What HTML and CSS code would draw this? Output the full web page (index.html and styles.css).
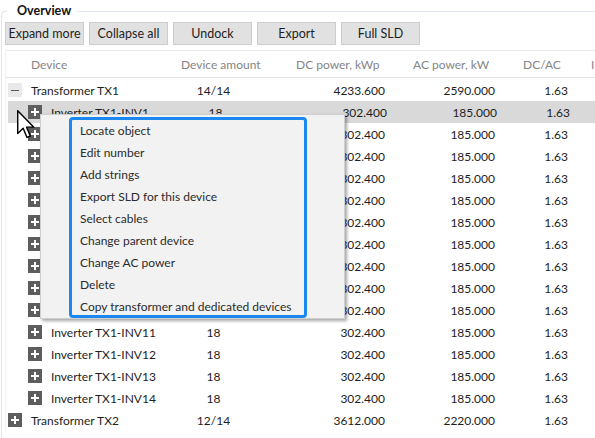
FILE: index.html
```html
<!DOCTYPE html>
<html lang="en">
<head>
    <meta charset="UTF-8">
    <title>Overview</title>
    <link rel="stylesheet" href="styles.css">
</head>
<body>
    <fieldset class="group">
        <legend>Overview</legend>

        <!-- Toolbar -->
        <div class="toolbar">
            <button>Expand more</button>
            <button>Collapse all</button>
            <button>Undock</button>
            <button>Export</button>
            <button>Full SLD</button>
        </div>

        <!-- Device tree -->
        <div class="tree">
            <div class="row head">
                <div class="c-name">Device</div>
                <div class="c-amount">Device amount</div>
                <div class="c-num">DC power, kWp</div>
                <div class="c-num">AC power, kW</div>
                <div class="c-num">DC/AC</div>
                <div class="c-num">I</div>
            </div>
            <div id="rows"></div>
        </div>
    </fieldset>

    <!-- Context menu over the tree -->
    <div class="menu">
        <ul class="menu-list">
            <li>Locate object</li>
            <li>Edit number</li>
            <li>Add strings</li>
            <li>Export SLD for this device</li>
            <li>Select cables</li>
            <li>Change parent device</li>
            <li>Change AC power</li>
            <li>Delete</li>
            <li>Copy transformer and dedicated devices</li>
        </ul>
    </div>

    <svg class="cursor" width="20" height="30" viewBox="0 0 14 21">
        <path d="M0.5 0.5 L0.5 16.5 L4.3 12.8 L7 19.2 L9.3 18.2 L6.7 12 L11.8 12 Z" fill="#fff" stroke="#000" stroke-width="1" stroke-linejoin="round"/>
    </svg>

    <script>
        const rows = [
            { level: 0, open: true, name: "Transformer TX1", amount: "14/14", dc: "4233.600", ac: "2590.000", ratio: "1.63" }
        ];
        for (let i = 1; i <= 14; i++) {
            rows.push({ level: 1, name: "Inverter TX1-INV" + i, amount: "18", dc: "302.400", ac: "185.000", ratio: "1.63", selected: i === 1 });
        }
        rows.push({ level: 0, name: "Transformer TX2", amount: "12/14", dc: "3612.000", ac: "2220.000", ratio: "1.63" });

        const box = document.getElementById("rows");
        rows.forEach(r => {
            const icon = r.open ? `<span class="toggle open"></span>` : `<span class="toggle"></span>`;
            box.insertAdjacentHTML("beforeend", `
                <div class="row${r.selected ? " selected" : ""}">
                    <div class="c-name lvl${r.level}">${icon}<span>${r.name}</span></div>
                    <div class="c-amount">${r.amount}</div>
                    <div class="c-num">${r.dc}</div>
                    <div class="c-num">${r.ac}</div>
                    <div class="c-num">${r.ratio}</div>
                    <div class="c-num"></div>
                </div>`);
        });
    </script>
</body>
</html>
```

FILE: styles.css
```css
body {
    margin: 0;
    font-family: 'Lato', 'Noto Sans', sans-serif;
    font-size: 12px;
    color: #1e1e1e;
    background: #fff;
    width: 595px;
    height: 438px;
    overflow: hidden;
    position: relative;
}

/* Group box */
.group {
    margin: 3px 0 0 1px;
    padding: 0 0 0 3px;
    border: 1px solid #dfe5ec;
    border-right: none;
    border-bottom: none;
    border-radius: 4px 0 0 0;
    width: 594px;
    height: 435px;
    box-sizing: border-box;
    overflow: hidden;
}

.group legend {
    font-weight: bold;
    font-size: 12.5px;
    color: #111;
    padding: 0 6px 0 10px;
    margin-left: 2px;
    line-height: 16px;
}

/* Toolbar */
.toolbar {
    display: flex;
    gap: 5px;
    margin-top: 3px;
}

.toolbar button {
    width: 79px;
    height: 23px;
    padding: 0;
    font-family: inherit;
    font-size: 12.5px;
    color: #1e1e1e;
    background: #e1e1e1;
    border: 1px solid #cdcdcd;
}

/* Tree grid */
.tree {
    margin-top: 5px;
    border-top: 1px solid #e6eaee;
    border-left: 1px solid #eef1f4;
    overflow: hidden;
}

.row {
    display: grid;
    grid-template-columns: 165px 115px 117px 110px 68px minmax(0, 1fr);
    height: 22px;
    align-items: center;
}

.row > div {
    white-space: nowrap;
    overflow: hidden;
}

.row.head {
    height: 26px;
    color: #858585;
    border-bottom: 1px solid #e3e6e9;
    margin-bottom: 1px;
}

.row.head div {
    text-align: left;
    padding: 0 0 0 10px;
}

.row.head .c-name {
    padding-left: 25px;
}

.row.selected {
    background: #d9d9d9;
    margin-left: 2px;
}

.row.selected .c-name {
    margin-left: -2px;
}

.c-name {
    display: flex;
    align-items: center;
}

.c-name.lvl0 {
    padding-left: 2px;
}

.c-name.lvl1 {
    padding-left: 22px;
}

.c-amount {
    text-align: center;
    padding-right: 30px;
}

.c-num {
    text-align: right;
    padding-right: 18px;
}

.row > .c-num:nth-child(5) {
    padding-right: 13px;
}

/* Expand / collapse boxes */
.toggle {
    width: 14px;
    height: 14px;
    margin-right: 9px;
    background: #5d5d5d;
    position: relative;
    flex: none;
}

.toggle::before,
.toggle::after {
    content: "";
    position: absolute;
    background: #fff;
}

.toggle::before {
    left: 3px;
    top: 6px;
    width: 8px;
    height: 2px;
}

.toggle::after {
    left: 6px;
    top: 3px;
    width: 2px;
    height: 8px;
}

.toggle.open {
    background: #e9e9e9;
}

.toggle.open::before {
    background: #5d5d5d;
    height: 1px;
    top: 7px;
}

.toggle.open::after {
    display: none;
}

/* Context menu */
.menu {
    position: absolute;
    left: 40px;
    top: 114px;
    width: 305px;
    height: 205px;
    box-sizing: border-box;
    background: #f2f2f2;
    border: 1px solid #cfcfcf;
    box-shadow: 2px 2px 3px rgba(0, 0, 0, 0.35);
    padding: 2px 0 0 28px;
}

.menu-list {
    list-style: none;
    margin: 0;
    padding: 0 0 0 8px;
    width: 238px;
    height: 201px;
    box-sizing: border-box;
    border: 3px solid #1a88f0;
    border-radius: 4px;
}

.menu-list li {
    line-height: 22px;
    color: #2b2b2b;
}

.cursor {
    position: absolute;
    left: 17px;
    top: 110px;
}
```
